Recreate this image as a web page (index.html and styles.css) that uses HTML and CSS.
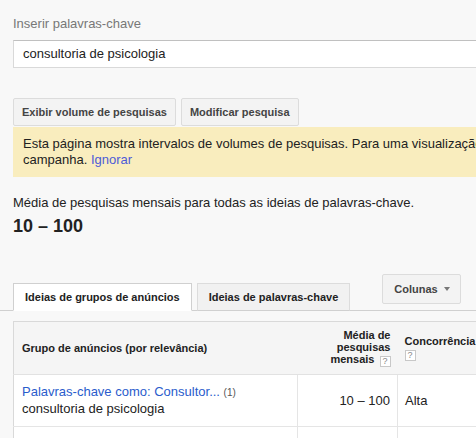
FILE: index.html
```html
<!DOCTYPE html>
<html lang="pt">
<head>
<meta charset="utf-8">
<link rel="stylesheet" href="styles.css">
</head>
<body>
<div class="page">
  <div class="section">
    <div class="label">Inserir palavras-chave</div>
    <div class="input">consultoria de psicologia</div>
    <div class="buttons">
      <button class="btn">Exibir volume de pesquisas</button>
      <button class="btn">Modificar pesquisa</button>
    </div>
    <div class="banner">Esta página mostra intervalos de volumes de pesquisas. Para uma visualização completa, crie uma<br>campanha. <a class="ignore">Ignorar</a></div>
    <div class="summary">Média de pesquisas mensais para todas as ideias de palavras-chave.</div>
    <div class="total">10 – 100</div>
  </div>
  <div class="tabbar">
    <div class="tab active">Ideias de grupos de anúncios</div>
    <div class="tab">Ideias de palavras-chave</div>
    <button class="btn cols">Colunas <span class="caret"></span></button>
  </div>
  <div class="section">
    <table class="grid">
      <colgroup>
        <col class="w1">
        <col class="w2">
        <col class="w3">
      </colgroup>
      <thead>
        <tr>
          <th class="c1">Grupo de anúncios (por relevância)</th>
          <th class="c2">Média de<br>pesquisas<br>mensais <span class="help">?</span></th>
          <th class="c3">Concorrência<br><span class="help">?</span></th>
        </tr>
      </thead>
      <tbody>
        <tr>
          <td class="c1"><a class="link">Palavras-chave como: Consultor...</a> <span class="count">(1)</span><br>consultoria de psicologia</td>
          <td class="c2">10 – 100</td>
          <td class="c3">Alta</td>
        </tr>
        <tr class="empty"><td class="c1"></td><td class="c2"></td><td class="c3"></td></tr>
      </tbody>
    </table>
  </div>
</div>
</body>
</html>
```

FILE: styles.css
```css
html, body {
  margin: 0;
  padding: 0;
  overflow: hidden;
  background: #f8f8f8;
}
body {
  font-family: "Liberation Sans", Arial, sans-serif;
  font-size: 13px;
  color: #222;
}
.page {
  width: 760px;
}
.section {
  padding-left: 13px;
}
.label {
  padding-top: 16px;
  line-height: 16px;
  color: #777;
  margin-bottom: 8px;
}
.input {
  box-sizing: border-box;
  height: 28px;
  line-height: 26px;
  background: #fff;
  border: 1px solid #d9d9d9;
  border-top-color: #c0c0c0;
  padding-left: 9px;
  color: #222;
}
.buttons {
  display: flex;
  gap: 5px;
  margin-top: 30px;
  margin-bottom: 1px;
}
.btn {
  box-sizing: border-box;
  height: 28px;
  padding: 0 8px;
  font-family: "Liberation Sans", Arial, sans-serif;
  font-size: 11px;
  font-weight: bold;
  color: #444;
  background: #f3f3f3;
  border: 1px solid #dcdcdc;
  border-radius: 2px;
}
.banner {
  background: #f9edbe;
  padding: 9px 10px 9px 10px;
  line-height: 16px;
  white-space: nowrap;
  color: #222;
}
.ignore {
  color: #4d5bd8;
}
.summary {
  margin-top: 18px;
  line-height: 16px;
}
.total {
  margin-top: 4px;
  font-size: 18px;
  font-weight: bold;
  line-height: 22px;
}
.tabbar {
  display: flex;
  align-items: flex-end;
  margin-top: 37px;
  padding-left: 13px;
  border-bottom: 1px solid #d0d0d0;
}
.tab {
  box-sizing: border-box;
  height: 28px;
  line-height: 27px;
  padding: 0 11px;
  margin-bottom: -1px;
  margin-right: 5px;
  font-size: 11px;
  font-weight: bold;
  color: #222;
  background: #f1f1f1;
  border: 1px solid #dcdcdc;
  border-bottom-color: #d0d0d0;
}
.tab.active {
  background: #fff;
  border-color: #d0d0d0;
  border-bottom-color: #fff;
}
.cols {
  height: 30px;
  margin-left: 27px;
  margin-bottom: 6px;
  padding: 0 10px 0 11px;
  display: flex;
  align-items: center;
  gap: 5px;
}
.caret {
  width: 0;
  height: 0;
  border-left: 3.5px solid transparent;
  border-right: 3.5px solid transparent;
  border-top: 4px solid #777;
  margin-left: 1px;
}
.grid {
  margin-top: 10px;
  border-collapse: collapse;
  background: #fff;
  border: 1px solid #d9d9d9;
  border-right: none;
  table-layout: fixed;
  width: 600px;
}
.w1 { width: 284px; }
.w2 { width: 100px; }
.w3 { width: 216px; }
.grid th {
  background: #f5f5f5;
  font-size: 11px;
  font-weight: bold;
  line-height: 12px;
  color: #222;
  height: 52px;
  padding: 0 7px;
  vertical-align: middle;
  border-bottom: 1px solid #e2e2e2;
}
.grid th.c1 {
  text-align: left;
  padding-left: 8px;
}
.grid th.c2 {
  text-align: right;
}
.grid th.c3 {
  text-align: left;
}
.grid td {
  height: 51px;
  line-height: 16px;
  padding: 0 7px;
  vertical-align: middle;
  border-bottom: 1px solid #e5e5e5;
  border-right: 1px solid #e5e5e5;
}
.grid td.c1 { padding-left: 8px; }
.grid td.c2 { text-align: right; }
.link {
  color: #2a5ccc;
}
.count {
  font-size: 10px;
  color: #555;
}
.help {
  display: inline-block;
  box-sizing: border-box;
  width: 11px;
  height: 11px;
  border: 1px solid #c8c8c8;
  background: #fff;
  font-size: 9px;
  font-weight: normal;
  line-height: 9px;
  text-align: center;
  color: #888;
  vertical-align: -1px;
  margin-left: 2px;
}
.c3 .help { margin-left: 0; margin-top: 2px; }
```
